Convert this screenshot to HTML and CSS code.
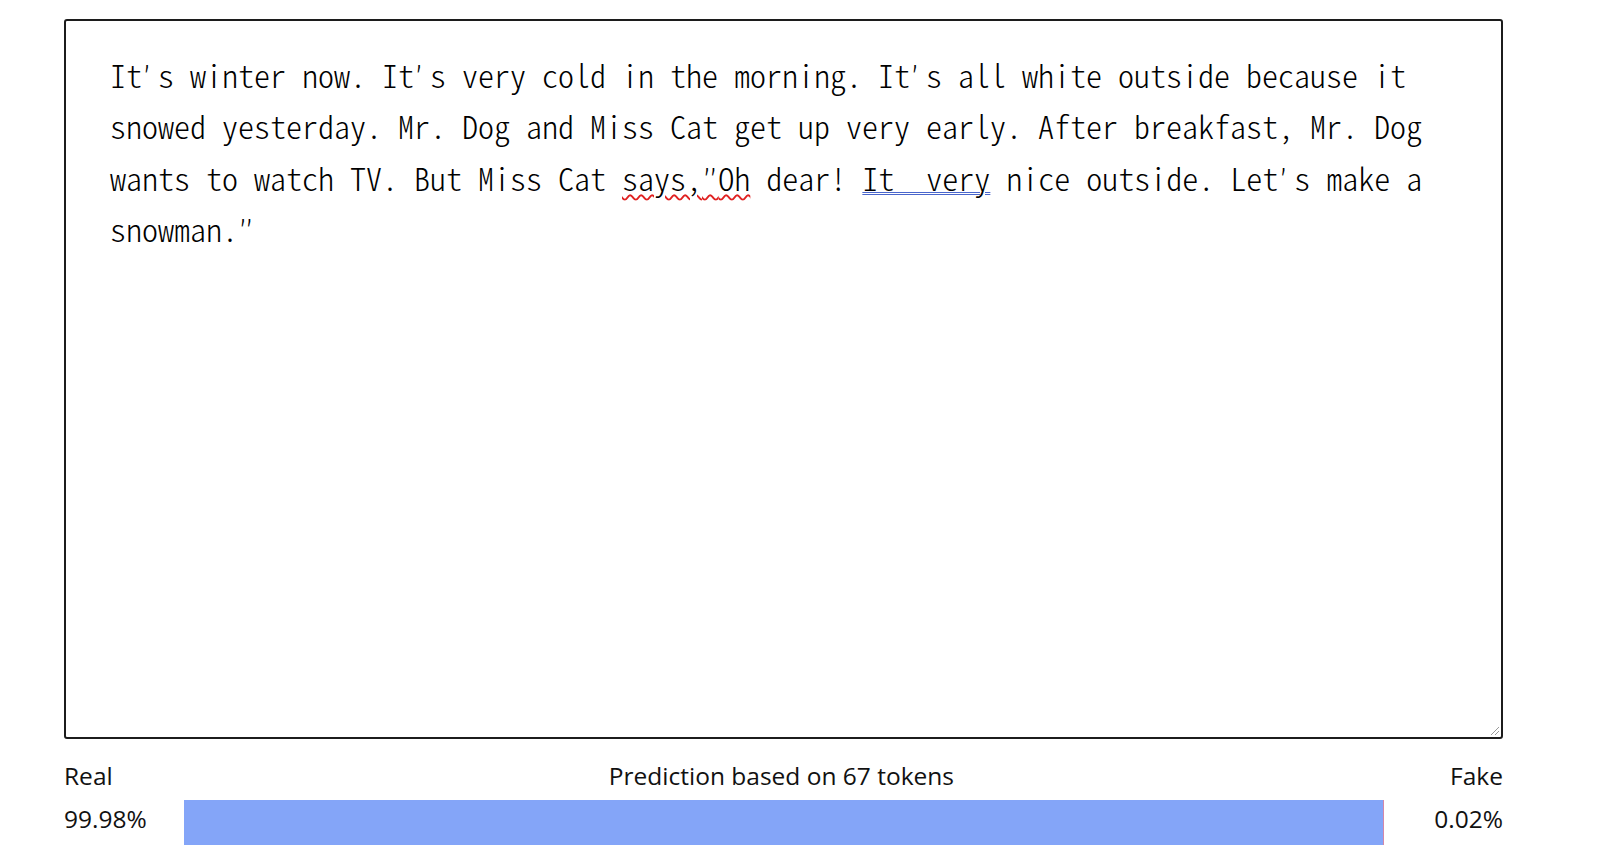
FILE: index.html
```html
<!DOCTYPE html>
<html>
<head>
<meta charset="utf-8">
<link rel="stylesheet" href="styles.css">
</head>
<body>
<main class="app">
<div class="editor"><div class="text">It<span class="q">’</span>s winter now. It<span class="q">’</span>s very cold in the morning. It<span class="q">’</span>s all white outside because it snowed yesterday. Mr. Dog and Miss Cat get up very early. After breakfast, Mr. Dog wants to watch TV. But Miss Cat <span class="spell">says,<span class="qq">”</span>Oh</span> dear! <span class="grammar">It  very</span> nice outside. Let<span class="q">’</span>s make a snowman.<span class="qq">”</span></div><svg class="grip" width="12" height="12" viewBox="0 0 12 12"><path d="M11 3 L3 11 M11 7 L7 11" stroke="#9a9a9a" stroke-width="1" fill="none"/></svg></div>
<div class="labels">
<span>Real</span>
<span>Prediction based on 67 tokens</span>
<span>Fake</span>
</div>
<div class="result">
<span class="val">99.98%</span>
<div class="bar"><div class="real" style="width:99.98%"></div><div class="fake"></div></div>
<span class="val right">0.02%</span>
</div>
</main>
</body>
</html>
```
FILE: styles.css
```css
html, body {
  margin: 0;
  background: #fff;
}
.app {
  padding: 19px 0 0 64px;
  width: 1439px;
  color: #111;
}
.editor {
  position: relative;
  box-sizing: border-box;
  height: 720px;
  border: 2px solid #1c1c1c;
  border-radius: 3px;
  padding: 28px 44px 0 44px;
}
.text {
  font-family: "Noto Sans CJK SC", "Noto Sans CJK JP", monospace;
  font-feature-settings: "hwid" 1;
  font-size: 32px;
  line-height: 51.3px;
  white-space: pre-wrap;
  color: #000;
  font-weight: 300;
}
.q,
.qq {
  font-family: "DejaVu Sans", sans-serif;
  line-height: 1px;
}
.q {
  letter-spacing: 5.8px;
}
.qq {
  letter-spacing: -0.3px;
}
.spell {
  text-decoration: underline wavy #e02020;
  text-decoration-thickness: 1.5px;
  text-underline-offset: 3px;
}
.grammar {
  text-decoration: underline double #4a66cc;
  text-decoration-thickness: 1px;
  text-underline-offset: 1px;
}
.grip {
  position: absolute;
  right: 1px;
  bottom: 1px;
}
.labels {
  display: flex;
  justify-content: space-between;
  margin-top: 21px;
  font-family: "Open Sans", sans-serif;
  font-size: 24.5px;
  line-height: 32px;
}
.result {
  display: flex;
  align-items: flex-start;
  margin-top: 8px;
  font-family: "Open Sans", sans-serif;
  font-size: 24.5px;
  line-height: 38px;
}
.val {
  width: 120px;
  flex: none;
}
.val.right {
  flex: 1;
  text-align: right;
}
.bar {
  display: flex;
  width: 1200px;
  height: 50px;
  flex: none;
}
.real {
  background: #84a5f8;
}
.fake {
  flex: 1;
  min-width: 1px;
  background: #d488a8;
}
```
